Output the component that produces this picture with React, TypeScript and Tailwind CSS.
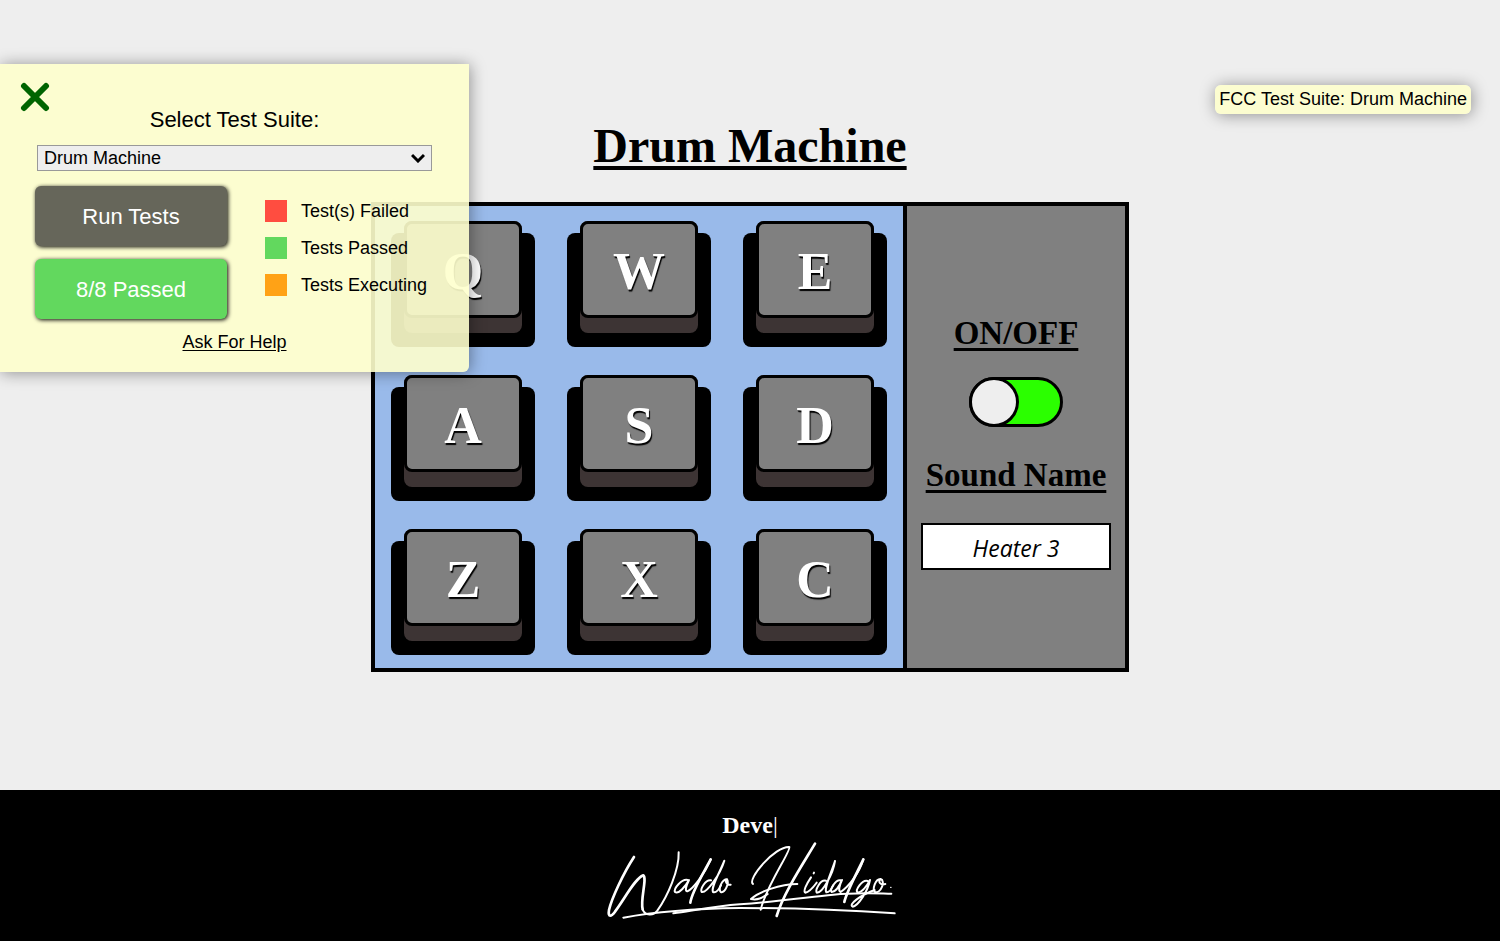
import { useState } from "react";

const KEYS = ["Q", "W", "E", "A", "S", "D", "Z", "X", "C"];

const LEGEND = [
  { label: "Test(s) Failed", swatch: "bg-[#ff4d40]" },
  { label: "Tests Passed", swatch: "bg-[#62d85e]" },
  { label: "Tests Executing", swatch: "bg-[#ffa216]" },
];

function DrumKey({ letter }: { letter: string }) {
  return (
    <button
      type="button"
      className="mt-3 flex h-[114px] w-36 items-start justify-center rounded-lg bg-black"
    >
      <span className="-mt-3 block h-28 w-[118px] rounded-lg bg-[#3d3434]">
        <span className="flex h-[97px] items-center justify-center rounded-lg border-3 border-black bg-[#808080] pt-1 font-['Liberation_Serif',serif] text-[52px] leading-none font-bold text-white [text-shadow:1px_2px_1px_#000]">
          {letter}
        </span>
      </span>
    </button>
  );
}

function Signature() {
  return (
    <svg
      viewBox="0 90 900 240"
      className="h-20 w-[300px]"
      fill="none"
      stroke="white"
      strokeLinecap="round"
      strokeLinejoin="round"
      role="img"
      aria-label="Waldo Hidalgo"
    >
      <g strokeWidth="8">
        <path d="M102 141C70 190 35 265 27 300C23 324 35 319 45 305C75 265 105 205 130 196C142 205 120 270 128 298" />
        <path d="M332 148C310 190 275 245 271 278" />
        <path d="M645 101C610 160 550 250 530 318" />
        <path d="M790 148C770 190 738 250 733 276" />
      </g>
      <g strokeWidth="6">
        <path d="M128 298C135 318 160 318 172 302C202 260 238 180 236 127" />
        <path d="M263 210C245 206 220 236 225 246C236 254 257 228 267 210C258 228 254 244 262 244C280 236 315 190 332 148" />
        <path d="M333 211C316 208 300 238 305 246C320 250 360 195 373 152C358 190 332 232 339 246C348 249 358 236 363 226" />
        <path d="M381 208C366 208 354 236 362 246C376 250 388 218 381 208C373 215 382 226 392 224" />
        <path d="M459 222C440 208 525 108 568 111C574 122 500 225 482 299" />
        <path d="M592 222C540 222 476 246 453 267C475 272 488 262 503 252" />
        <path d="M633 202C618 224 609 244 616 248C630 246 644 226 650 218M642 188L641 190" />
        <path d="M678 212C660 208 644 242 651 248C668 248 699 192 705 153C693 190 671 236 679 247C690 248 696 234 700 226" />
        <path d="M722 211C706 208 688 240 695 246C708 246 720 224 726 210C718 226 714 244 722 246C746 230 778 190 790 148" />
        <path d="M803 213C786 208 766 240 772 247C786 249 802 226 810 210C804 242 776 286 758 290C744 284 780 256 824 240" />
        <path d="M842 207C826 206 816 238 825 246C842 252 858 212 842 207C832 216 842 226 856 222" />
        <path d="M872 232L873 232" strokeWidth="4" />
      </g>
      <g strokeWidth="6">
        <path d="M70 323C150 308 280 296 420 294C560 294 740 300 884 310" />
        <path d="M220 310C300 298 350 288 420 283C540 274 620 262 700 254C770 246 830 250 874 251" />
      </g>
    </svg>
  );
}

function TestPanel() {
  return (
    <aside className="absolute top-16 left-0 flex w-[469px] flex-col rounded-br-md bg-[#feffcd]/90 px-[35px] pt-10 pb-5 font-['Liberation_Sans',sans-serif] text-black shadow-[1px_1px_16px_rgba(0,0,0,0.4)]">
      <button type="button" aria-label="Close" className="absolute top-[18px] left-5">
        <svg viewBox="0 0 30 30" className="size-[30px]" stroke="#006400" strokeWidth="6" strokeLinecap="round">
          <path d="M4 4L26 26M26 4L4 26" />
        </svg>
      </button>
      <label htmlFor="suite" className="self-center text-[22px] leading-8">
        Select Test Suite:
      </label>
      <div className="relative mx-0.5 mt-[9px]">
        <select
          id="suite"
          className="block h-[26px] w-full appearance-none border border-[#999] bg-[#eee] px-1.5 text-[18px] leading-6"
        >
          <option>Drum Machine</option>
        </select>
        <svg
          viewBox="0 0 14 10"
          className="pointer-events-none absolute top-2 right-[7px] h-[10px] w-[14px]"
          fill="none"
          stroke="black"
          strokeWidth="3"
        >
          <path d="M1 2L7 8L13 2" />
        </svg>
      </div>
      <div className="mt-[15px] flex">
        <div className="flex w-48 flex-col gap-[13px] text-[22px] text-white">
          <button type="button" className="h-[60px] rounded-md bg-[#66665a] shadow-[1px_1px_4px_#000]">
            Run Tests
          </button>
          <button type="button" className="h-[60px] rounded-md bg-[#62d85e] shadow-[1px_1px_4px_#000]">
            8/8 Passed
          </button>
        </div>
        <ul className="ml-[38px] flex flex-col gap-[15px] pt-[14px] text-[18px]">
          {LEGEND.map((item) => (
            <li key={item.label} className="flex h-[22px] items-center gap-[14px]">
              <span className={`size-[22px] ${item.swatch}`} />
              <span className="leading-5">{item.label}</span>
            </li>
          ))}
        </ul>
      </div>
      <a href="#help" className="mt-[13px] self-center text-[18px] leading-5 underline underline-offset-2">
        Ask For Help
      </a>
    </aside>
  );
}

export default function App() {
  const [power, setPower] = useState(true);

  return (
    <div className="relative flex min-h-screen flex-col bg-[#eee] text-black">
      <main className="flex flex-1 flex-col items-center justify-center font-['Liberation_Serif',serif]">
        <h1 className="mb-7 text-[48px] leading-[56px] font-bold underline decoration-4 underline-offset-4">
          Drum Machine
        </h1>
        <div className="flex border-4 border-black bg-[#808080]">
          <div className="grid grid-cols-3 gap-x-8 gap-y-7 border-r-4 border-black bg-[#99baea] px-4 pt-[15px] pb-[13px]">
            {KEYS.map((letter) => (
              <DrumKey key={letter} letter={letter} />
            ))}
          </div>
          <div className="flex w-[218px] flex-col items-center justify-center px-[14px] pt-2">
            <label htmlFor="power" className="text-[33px] leading-10 font-bold underline decoration-3 underline-offset-4">
              ON/OFF
            </label>
            <div className="mt-6 flex h-[50px] w-[94px] rounded-full border-3 border-black bg-[#2bff00]">
              <input
                id="power"
                type="checkbox"
                checked={power}
                onChange={(e) => setPower(e.target.checked)}
                className="-m-[3px] size-[50px] appearance-none rounded-full border-3 border-black bg-[#eee]"
              />
            </div>
            <label htmlFor="sound" className="mt-7 text-[33px] leading-10 font-bold whitespace-nowrap underline decoration-3 underline-offset-4">
              Sound Name
            </label>
            <input
              id="sound"
              readOnly
              value="Heater 3"
              className="mt-7 h-[47px] w-full border-2 border-black bg-white pt-1 text-center font-['Open_Sans',sans-serif] text-[23px] italic"
            />
          </div>
        </div>
      </main>
      <footer className="flex h-[151px] flex-col items-center bg-black pt-5 text-white">
        <p className="font-['Liberation_Serif',serif] text-2xl leading-[30px] font-bold">
          Deve<span className="font-normal">|</span>
        </p>
        <Signature />
      </footer>
      <div className="absolute top-[85px] right-[29px] rounded-md bg-[#feffcd]/90 px-1 font-['Liberation_Sans',sans-serif] text-[18px] leading-[29px] shadow-[1px_1px_16px_rgba(0,0,0,0.4)]">
        FCC Test Suite: Drum Machine
      </div>
      <TestPanel />
    </div>
  );
}
